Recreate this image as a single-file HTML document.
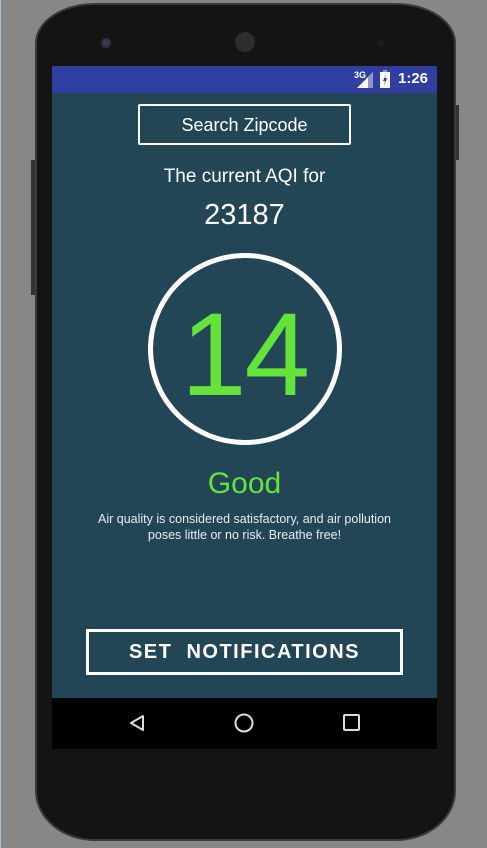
<!DOCTYPE html>
<html><head><meta charset="utf-8"><style>
*{margin:0;padding:0;box-sizing:border-box}
body{width:487px;height:848px;background:#878787;position:relative;overflow:hidden;font-family:"Liberation Sans",sans-serif}
.edge{position:absolute;left:0;top:0;width:1px;height:848px;background:#a9c2e0}
.phone{position:absolute;left:35px;top:3px;width:421px;height:838px;background:#141414;border-radius:60px 60px 60px 60px / 40px 40px 50px 50px;border:2px solid #3a3a3a}
.btn-side{position:absolute;background:#333}
.screen{position:absolute;left:52px;top:66px;width:385px;height:683px;background:#234657}
.status{position:absolute;left:0;top:0;width:385px;height:27px;background:#303f9f}
.nav{position:absolute;left:0;top:632px;width:385px;height:51px;background:#000}
.t{position:absolute;left:0;width:385px;text-align:center;color:#fff}
</style></head><body>
<div class="edge"></div>
<div class="btn-side" style="left:455px;top:105px;width:4px;height:55px"></div>
<div class="btn-side" style="left:31px;top:160px;width:4px;height:135px"></div>
<div class="phone">
 <div style="position:absolute;left:64px;top:33px;width:10px;height:10px;border-radius:50%;background:#2d3a6a;border:2px solid #333"></div>
 <div style="position:absolute;left:198px;top:27px;width:20px;height:20px;border-radius:50%;background:#2e2e2e"></div>
 <div style="position:absolute;left:340px;top:34px;width:8px;height:8px;border-radius:50%;background:#1c1c1c"></div>
</div>
<div class="screen">
 <div class="status">
  <div style="position:absolute;left:302px;top:4px;color:#fff;font-size:9px;font-weight:bold">3G</div>
  <svg style="position:absolute;left:303px;top:4px" width="20" height="20"><polygon points="18,2 18,18 2,18" fill="#fff"/><polygon points="18,2 18,18 13,18 13,7" fill="#8e96cc"/></svg>
  <svg style="position:absolute;left:328px;top:4px" width="12" height="20"><rect x="3" y="0" width="4" height="2" fill="#8e96cc"/><rect x="0" y="2" width="10" height="16" fill="#fff"/><polygon points="6,4 3,11 5,11 4,16 7,8 5,8" fill="#303f9f"/></svg>
  <div style="position:absolute;left:346px;top:4px;color:#fff;font-size:15px;font-weight:bold">1:26</div>
 </div>
 <div style="position:absolute;left:86px;top:38px;width:213px;height:41px;border:2px solid #fff;border-radius:2px;color:#fff;font-size:18px;text-align:center;line-height:38px">Search Zipcode</div>
 <div class="t" style="top:100px;font-size:19px">The current AQI for</div>
 <div class="t" style="top:133px;font-size:29px">23187</div>
 <div style="position:absolute;left:96px;top:187px;width:194px;height:192px;border:5px solid #fff;border-radius:50%"></div>
 <div class="t" style="top:224px;font-size:118px;line-height:130px;color:#66e33a;letter-spacing:-2px">14</div>
 <div class="t" style="top:401px;font-size:30px;color:#66e33a">Good</div>
 <div class="t" style="top:445px;font-size:12.5px;line-height:16px;color:#e6ecef">Air quality is considered satisfactory, and air pollution<br>poses little or no risk. Breathe free!</div>
 <div style="position:absolute;left:34px;top:563px;width:317px;height:46px;border:3px solid #fff;color:#fff;font-size:20px;font-weight:bold;letter-spacing:1.5px;text-align:center;line-height:40px">SET&nbsp; NOTIFICATIONS</div>
 <div class="nav">
  <svg style="position:absolute;left:76px;top:15px" width="20" height="20"><polygon points="15,3 15,17 3,10" fill="none" stroke="#ddd" stroke-width="2" stroke-linejoin="round"/></svg>
  <svg style="position:absolute;left:181px;top:14px" width="22" height="22"><circle cx="11" cy="11" r="8.5" fill="none" stroke="#ddd" stroke-width="2"/></svg>
  <svg style="position:absolute;left:290px;top:15px" width="20" height="20"><rect x="2" y="2" width="15" height="15" rx="1" fill="none" stroke="#ddd" stroke-width="2"/></svg>
 </div>
</div>
</body></html>
